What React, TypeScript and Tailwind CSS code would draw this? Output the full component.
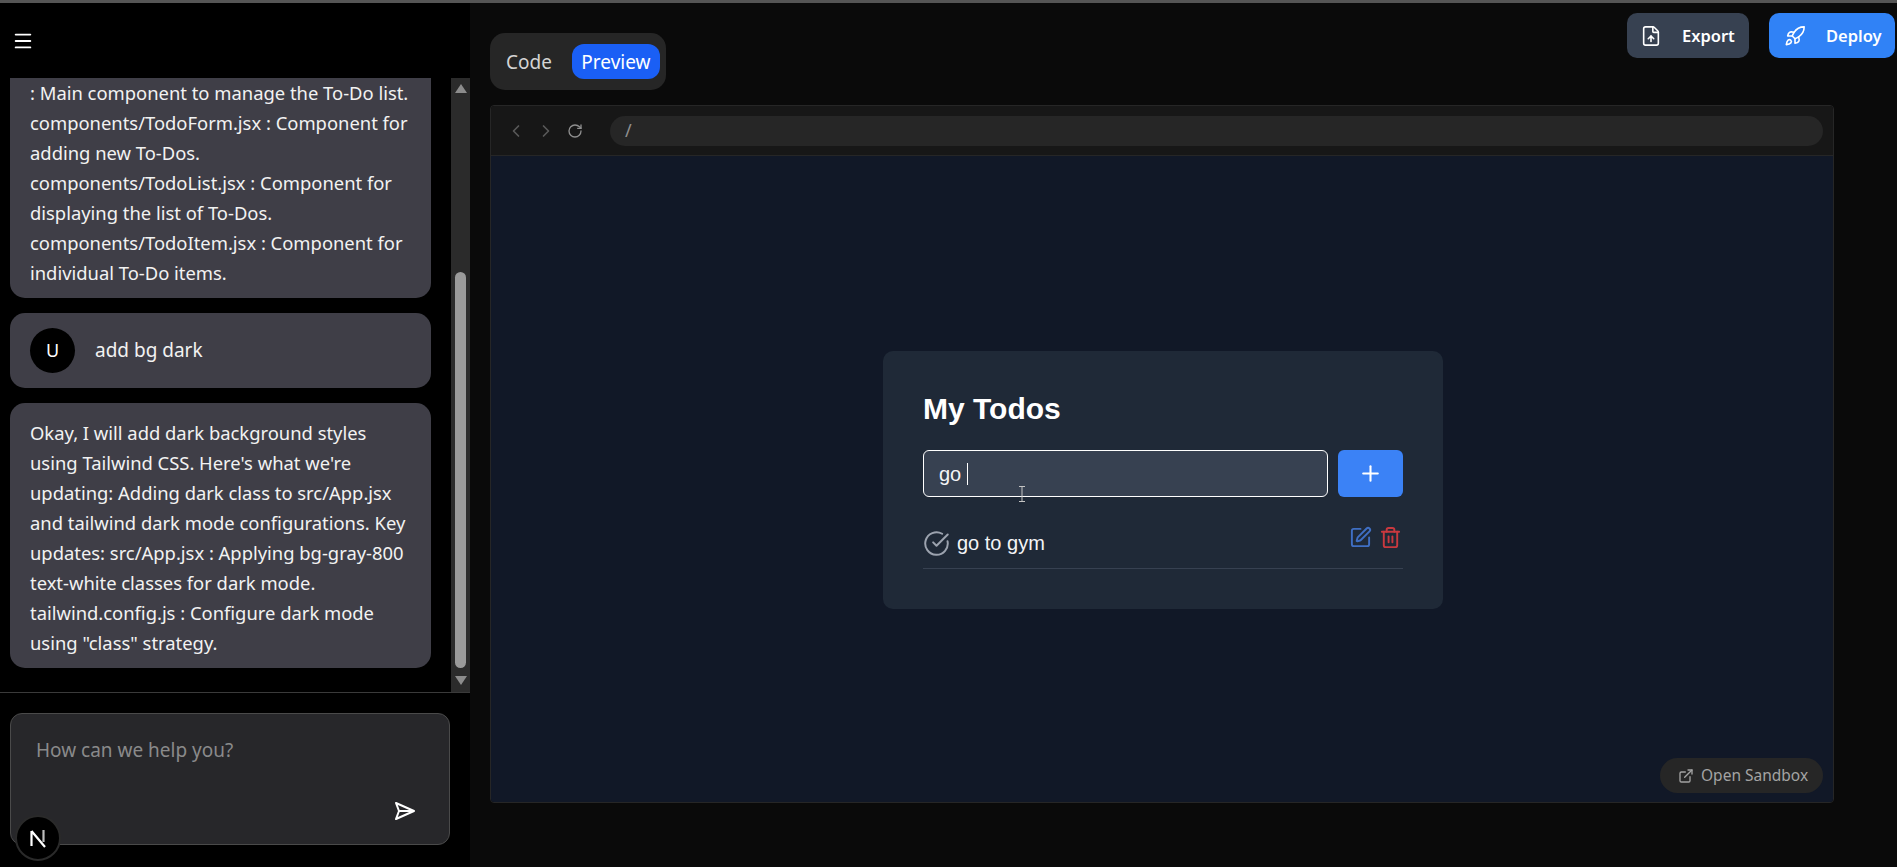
import { Menu, ChevronLeft, ChevronRight, RotateCw, FileUp, Rocket, ExternalLink, Plus, CircleCheckBig, SquarePen, Trash2 } from "lucide-react";

const uiFont = "font-['Noto_Sans','Open_Sans',sans-serif]";

function Bubble({ children }: { children: React.ReactNode }) {
  return <div className="mx-[10px] mr-[20px] shrink-0 rounded-[15px] bg-[#3f3e47] px-5 pt-[15px] pb-[10px] text-[18.4px] leading-[30px] text-[#f2f2f2]">{children}</div>;
}

export default function App() {
  return (
    <div className={`flex h-screen flex-col overflow-hidden bg-[#0a0a0a] ${uiFont}`}>
      <div className="h-[3px] shrink-0 bg-[#555555]" />
      <div className="flex min-h-0 flex-1">
        <aside className="flex w-[470px] shrink-0 flex-col bg-black">
          <div className="flex h-[75px] shrink-0 items-center pl-[12px]">
            <Menu size={22} className="text-white" strokeWidth={2} />
          </div>
          <div className="flex h-[615px] shrink-0 border-b border-[#3a3a3a]">
            <div className="flex min-w-0 flex-1 flex-col justify-end gap-[15px] overflow-hidden pb-[24px]">
              <Bubble>
                : Main component to manage the To-Do list. components/TodoForm.jsx : Component for adding new To-Dos. components/TodoList.jsx : Component for displaying the list of To-Dos. components/TodoItem.jsx : Component for individual To-Do items.
              </Bubble>
              <div className="mx-[10px] mr-[20px] flex h-[75px] shrink-0 items-center gap-[20px] rounded-[15px] bg-[#3f3e47] px-5 text-[19px] text-[#f2f2f2]">
                <div className="flex h-[45px] w-[45px] items-center justify-center rounded-full bg-black text-[18px] text-white">U</div>
                <span>add bg dark</span>
              </div>
              <Bubble>
                Okay, I will add dark background styles using Tailwind CSS. Here's what we're updating: Adding dark class to src/App.jsx and tailwind dark mode configurations. Key updates: src/App.jsx : Applying bg-gray-800 text-white classes for dark mode. tailwind.config.js : Configure dark mode using "class" strategy.
              </Bubble>
            </div>
            <div className="flex w-[19px] shrink-0 flex-col items-center bg-[#2b2b2b] py-[6px]">
              <svg width="12" height="10" viewBox="0 0 12 10" className="shrink-0"><path d="M6 0 L12 9 L0 9 Z" fill="#8c8c8c" /></svg>
              <div className="mt-[178px] h-[396px] w-[11px] rounded-full bg-[#9a9a9a]" />
              <div className="flex-1" />
              <svg width="12" height="10" viewBox="0 0 12 10" className="shrink-0"><path d="M0 0 L12 0 L6 9 Z" fill="#8c8c8c" /></svg>
            </div>
          </div>
          <div className="relative mx-[10px] mt-[20px] h-[132px] w-[440px] shrink-0 rounded-[12px] border border-[#4a4a4a] bg-[#27272a] pl-[25px] pt-[21px] text-[19px] leading-[30px] text-[#8a8a8a]">
            How can we help you?
            <svg width="22" height="20" viewBox="0 0 22 20" fill="none" className="absolute right-[33px] bottom-[23px]">
              <path d="M2 2 L20 10 L2 18 L5 10 Z M5 10 H20" stroke="white" strokeWidth="2" strokeLinejoin="round" />
            </svg>
            <div className="absolute left-[4px] top-[101px] flex h-[46px] w-[46px] items-center justify-center rounded-full border-2 border-[#2a2a2a] bg-black">
              <svg width="20" height="20" viewBox="0 0 20 20" fill="none">
                <path d="M3.5 18 V3 M3.5 3 L17 19" stroke="white" strokeWidth="2.2" />
                <path d="M15.5 2 V14" stroke="#bdbdbd" strokeWidth="2.2" />
              </svg>
            </div>
          </div>
        </aside>

        <main className="flex min-w-0 flex-1 flex-col pl-[20px]">
          <div className="flex h-[102px] shrink-0 items-start justify-between pr-[2px]">
            <div className="mt-[30px] flex h-[57px] w-[176px] items-center gap-[15px] rounded-[15px] bg-[#262626] pl-[11px] pr-[5px] text-[19px] leading-[26px]">
              <span className="px-[5px] pt-[1px] text-[#d4d4d4]">Code</span>
              <span className="flex h-[35px] w-[88px] items-center justify-center rounded-[12px] bg-[#1a5ff5] text-white">Preview</span>
            </div>
            <div className="mt-[10px] flex gap-[20px] text-[16.5px] font-semibold text-white">
              <div className="flex h-[45px] w-[122px] items-center gap-[20px] rounded-[10px] bg-[#374151] pl-[13px]">
                <FileUp size={22} strokeWidth={1.75} />
                <span className="pt-[1px]">Export</span>
              </div>
              <div className="flex h-[45px] w-[126px] items-center gap-[20px] rounded-[10px] bg-[#3082f6] pl-[15px]">
                <Rocket size={22} strokeWidth={1.75} />
                <span className="pt-[1px]">Deploy</span>
              </div>
            </div>
          </div>

          <div className="flex h-[698px] w-[1344px] shrink-0 flex-col overflow-hidden rounded-[4px] border border-[#262626]">
            <div className="flex h-[50px] shrink-0 items-center border-b border-[#262626] bg-[#171717] pl-[15px] pr-[10px]">
              <ChevronLeft size={20} className="text-[#5a5a5a]" />
              <ChevronRight size={20} className="ml-[10px] text-[#5a5a5a]" />
              <RotateCw size={16} className="ml-[11px] text-[#8f8f8f]" />
              <div className="ml-[27px] flex h-[30px] flex-1 items-center rounded-full bg-[#262626] pl-[15px] text-[18px] text-[#8f8f8f]">/</div>
            </div>
            <div className="relative flex flex-1 items-start justify-center bg-[#111827] pl-[2px] pt-[195px] font-['Liberation_Sans',Arial,sans-serif]">
              <div className="h-[258px] w-[560px] rounded-[10px] bg-[#1f2937] p-[40px] pt-[40px]">
                <h1 className="h-[40px] text-[30px] font-bold leading-[36px] text-white">My Todos</h1>
                <div className="mt-[19px] flex gap-[10px]">
                  <div className="relative flex h-[47px] w-[405px] items-center rounded-[6px] border border-white bg-[#374151] pl-[15px] text-[20px] text-[#f3f4f6]">
                    <span className="whitespace-pre">go </span>
                    <span className="h-[22px] w-px bg-white" />
                    <svg width="8" height="16" viewBox="0 0 8 16" fill="none" className="absolute left-[94px] top-[35px]">
                      <path d="M1 .5 H7 M1 15.5 H7 M4 .5 V15.5" stroke="#c4c4c4" strokeWidth="1" />
                    </svg>
                  </div>
                  <div className="flex h-[47px] w-[65px] items-center justify-center rounded-[6px] bg-[#3b82f6] text-white">
                    <Plus size={25} strokeWidth={2} />
                  </div>
                </div>
                <div className="mt-[19px] flex h-[53px] items-start justify-between border-b border-[#374151] pt-[10px]">
                  <div className="flex items-center gap-[7px] pt-[2px]">
                    <CircleCheckBig size={27} strokeWidth={1.75} className="text-[#9ca3af]" />
                    <span className="text-[20px] text-[#f3f4f6]">go to gym</span>
                  </div>
                  <div className="flex items-center gap-[7px] pr-[1px]">
                    <SquarePen size={23} strokeWidth={2} className="text-[#3f6fc4]" />
                    <Trash2 size={23} strokeWidth={2} className="text-[#c9393f]" />
                  </div>
                </div>
              </div>
              <div className={`absolute bottom-[9px] right-[10px] flex h-[35px] w-[163px] items-center gap-[7px] rounded-full bg-[#262626] pl-[18px] text-[15.5px] text-[#a3a3a3] ${uiFont}`}>
                <ExternalLink size={16} />
                <span>Open Sandbox</span>
              </div>
            </div>
          </div>
        </main>
      </div>
    </div>
  );
}
